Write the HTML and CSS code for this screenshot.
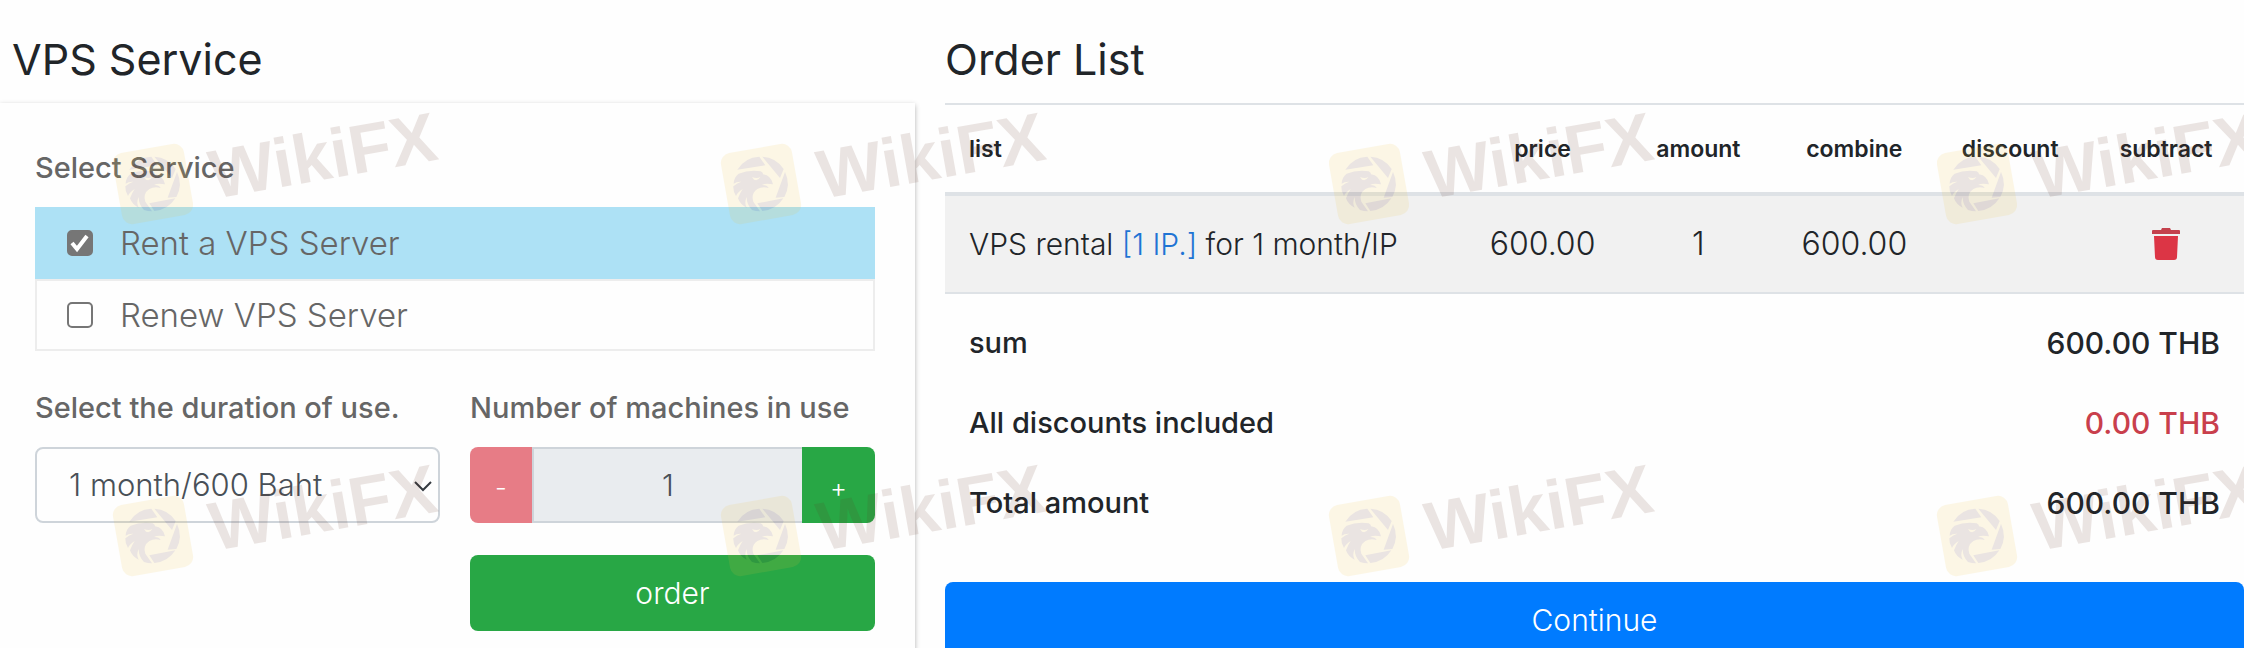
FILE: index.html
```
<!DOCTYPE html>
<html lang="en">
<head>
  <meta charset="UTF-8">
  <meta name="viewport" content="width=device-width, initial-scale=1.0">
  <title>VPS Service</title>
  <link rel="stylesheet" href="styles.css">
</head>
<body>
  <main class="page">
    <section class="service">
      <h1 class="page-title">VPS Service</h1>

      <form class="card">
        <fieldset class="options">
          <legend class="field-label">Select Service</legend>
          <label class="option active">
            <input type="checkbox" name="rent" checked>
            Rent a VPS Server
          </label>
          <label class="option">
            <input type="checkbox" name="renew">
            Renew VPS Server
          </label>
        </fieldset>

        <div class="fields">
          <div class="field">
            <label class="field-label" for="duration">Select the duration of use.</label>
            <div class="select-wrap">
              <select id="duration" class="control">
                <option>1 month/600 Baht</option>
              </select>
              <svg class="chevron" viewBox="0 0 18 12" aria-hidden="true">
                <path d="M1 2l8 8 8-8" fill="none" stroke="#343a40" stroke-width="2"/>
              </svg>
            </div>
          </div>

          <div class="field">
            <label class="field-label" for="machines">Number of machines in use</label>
            <div class="stepper">
              <button type="button" class="step minus" disabled>-</button>
              <input id="machines" class="control" type="text" value="1" readonly>
              <button type="button" class="step plus">+</button>
            </div>
            <button type="button" class="btn btn-success">order</button>
          </div>
        </div>
      </form>
    </section>

    <section class="orders">
      <h1 class="page-title">Order List</h1>

      <table class="order-table">
        <colgroup>
          <col class="col-list">
          <col span="5">
        </colgroup>
        <thead>
          <tr>
            <th>list</th>
            <th>price</th>
            <th>amount</th>
            <th>combine</th>
            <th>discount</th>
            <th>subtract</th>
          </tr>
        </thead>
        <tbody>
          <tr>
            <td>VPS rental <a href="#">[1 IP.]</a> for 1 month/IP</td>
            <td class="num">600.00</td>
            <td class="num">1</td>
            <td class="num">600.00</td>
            <td></td>
            <td>
              <button type="button" class="remove" aria-label="Remove">
                <svg viewBox="0 0 28 32" width="28" height="32" aria-hidden="true">
                  <path fill="#c4414d" d="M1 2h8l1-2h8l1 2h8a1 1 0 0 1 1 1v3H0V3a1 1 0 0 1 1-1z"/>
                  <path fill="#dc3545" d="M2 8h24l-1 21a3 3 0 0 1-3 3H6a3 3 0 0 1-3-3z"/>
                </svg>
              </button>
            </td>
          </tr>
        </tbody>
      </table>

      <table class="totals">
        <tr><th>sum</th><td>600.00 THB</td></tr>
        <tr><th>All discounts included</th><td class="danger">0.00 THB</td></tr>
        <tr><th>Total amount</th><td>600.00 THB</td></tr>
      </table>

      <button type="button" class="btn btn-primary">Continue</button>
    </section>
  </main>

  <svg class="defs" aria-hidden="true">
    <defs>
      <g id="eagle">
        <rect x="-36" y="-36" width="72" height="72" rx="10" transform="rotate(-10)" fill="#eec23a"/>
        <g transform="scale(.3333) translate(-901 -283)" fill="#612f1e">
          <path d="M830 240A82 82 0 0 1 896 201L914 227Z"/>
          <path d="M905 201A82 82 0 0 1 969 238L958 265Z"/>
          <path d="M973 247A82 82 0 0 1 971 322L945 324Z"/>
          <path d="M968 326A82 82 0 0 1 905 364L890 341Z"/>
          <path d="M834 252Q865 240 900 245Q908 249 907 254Q932 258 937 284Q915 279 904 286Q920 286 924 295Q905 290 890 298Q870 312 878 336L898 365A82 82 0 0 1 874 361Q858 345 858 322Q850 340 858 354Q838 344 832 326Q838 310 846 298Q830 308 826 319Q817 305 818 290Q830 280 842 276Q828 275 819 282Q820 262 834 252Z"/>
          <path d="M874 262Q888 268 899 262Q892 275 880 270Z" fill="#eec23a"/>
        </g>
      </g>
    </defs>
  </svg>

  <div class="watermarks" aria-hidden="true">
    <svg class="mark"><use href="#eagle" x="153" y="184"/><text transform="translate(214 199) rotate(-10)">WikiFX</text></svg>
    <svg class="mark"><use href="#eagle" x="153" y="184"/><text transform="translate(214 199) rotate(-10)">WikiFX</text></svg>
    <svg class="mark"><use href="#eagle" x="153" y="184"/><text transform="translate(214 199) rotate(-10)">WikiFX</text></svg>
    <svg class="mark"><use href="#eagle" x="153" y="184"/><text transform="translate(214 199) rotate(-10)">WikiFX</text></svg>
    <svg class="mark"><use href="#eagle" x="153" y="184"/><text transform="translate(214 199) rotate(-10)">WikiFX</text></svg>
    <svg class="mark"><use href="#eagle" x="153" y="184"/><text transform="translate(214 199) rotate(-10)">WikiFX</text></svg>
    <svg class="mark"><use href="#eagle" x="153" y="184"/><text transform="translate(214 199) rotate(-10)">WikiFX</text></svg>
    <svg class="mark"><use href="#eagle" x="153" y="184"/><text transform="translate(214 199) rotate(-10)">WikiFX</text></svg>
  </div>
</body>
</html>
```
FILE: styles.css
```
* {
  box-sizing: border-box;
}

body {
  margin: 0;
  min-height: 100vh;
  position: relative;
  overflow: hidden;
  font-family: Inter, sans-serif;
  font-size: 30px;
  font-weight: 350;
  line-height: 48px;
  color: #212529;
  background: #fefefe;
}

button,
input,
select {
  font: inherit;
  color: inherit;
}

.page {
  display: grid;
  grid-template-columns: 915fr 1299fr;
  gap: 30px;
}

.page-title {
  margin: 0;
  padding: 31px 0 16px;
  font-size: 43px;
  font-weight: 400;
  line-height: 56px;
}

/* left column */
.service {
  display: flex;
  flex-direction: column;
}

.service .page-title {
  padding-left: 12px;
}

.card {
  flex: 1;
  padding: 41px 40px 24px 35px;
  color: #666;
  box-shadow: 0 2px 5px rgba(0, 0, 0, 0.3);
  background: #fefefe;
}

.field-label {
  display: block;
  padding: 0;
  font-size: 29px;
  font-weight: 500;
}

.options {
  margin: 0;
  padding: 0;
  border: 0;
}

.options .field-label {
  margin-bottom: 15px;
}

.option {
  display: flex;
  align-items: center;
  gap: 27px;
  height: 72px;
  padding-left: 30px;
  font-size: 33px;
  border: 2px solid #ededed;
}

.option.active {
  background: #ade1f5;
  border-color: #ade1f5;
}

.option input {
  appearance: none;
  width: 26px;
  height: 26px;
  margin: 0;
  border: 2px solid #767676;
  border-radius: 5px;
  background: #fff;
}

.option input:checked {
  background: #767676 url("data:image/svg+xml,%3Csvg xmlns='http://www.w3.org/2000/svg' viewBox='0 0 22 22'%3E%3Cpath d='M3 11l5 6L18 4' fill='none' stroke='white' stroke-width='4'/%3E%3C/svg%3E") center / contain no-repeat;
}

.fields {
  display: grid;
  grid-template-columns: 1fr 1fr;
  gap: 30px;
  margin-top: 33px;
}

.field .field-label {
  margin-bottom: 15px;
}

.control {
  width: 100%;
  height: 76px;
  padding: 0 32px;
  color: #495057;
  border: 2px solid #ced4da;
  border-radius: 8px;
  background: transparent;
}

.select-wrap {
  position: relative;
}

.select-wrap .control {
  appearance: none;
  font-size: 31px;
}

.chevron {
  position: absolute;
  top: 33px;
  right: 8px;
  width: 18px;
  height: 12px;
}

.stepper {
  display: flex;
}

.stepper .control {
  flex: 1;
  min-width: 0;
  text-align: center;
  border-right: 0;
  border-radius: 0;
  background: #e9ecef;
}

.step {
  padding-top: 6px;
  border: 0;
  font-size: 26px;
  color: #fff;
}

.minus {
  width: 62px;
  border-radius: 8px 0 0 8px;
  background: #e77c86;
}

.plus {
  width: 73px;
  border-radius: 0 8px 8px 0;
  background: #28a745;
}

.btn {
  display: block;
  width: 100%;
  height: 76px;
  border: 0;
  border-radius: 8px;
  color: #fff;
}

.btn-success {
  margin-top: 32px;
  background: #28a745;
}

.btn-primary {
  margin-top: 39px;
  background: #007bff;
}

/* right column */
.order-table {
  width: 100%;
  table-layout: fixed;
  border-collapse: collapse;
}

.col-list {
  width: 40%;
}

.order-table th,
.order-table td {
  padding: 0;
  text-align: center;
}

.order-table th {
  height: 90px;
  font-size: 23px;
  font-weight: 600;
  border-top: 2px solid #dee2e6;
  border-bottom: 4px solid #dee2e6;
}

.order-table th:first-child,
.order-table td:first-child {
  padding-left: 24px;
  text-align: left;
}

.order-table td {
  height: 99px;
  background: #f1f1f1;
  border-bottom: 2px solid #dee2e6;
}

.order-table .num {
  font-size: 32px;
}

.order-table a {
  color: #1f74d4;
  text-decoration: none;
}

.remove {
  display: block;
  margin: 0 auto;
  padding: 0;
  border: 0;
  background: none;
}

.remove svg {
  display: block;
}

.totals {
  width: 100%;
  margin-top: 9px;
  border-collapse: collapse;
  font-size: 29px;
}

.totals th,
.totals td {
  height: 80px;
  padding: 0 24px;
  font-weight: 500;
  text-align: left;
}

.totals td {
  font-size: 30px;
  text-align: right;
}

.totals .danger {
  color: #c93f4c;
}

/* watermark layer */
.defs {
  position: absolute;
  width: 0;
  height: 0;
}

.watermarks {
  position: absolute;
  inset: 0;
  display: grid;
  grid-template-columns: repeat(4, 608px);
  grid-auto-rows: 352px;
  overflow: hidden;
  opacity: 0.12;
  pointer-events: none;
}

.mark {
  width: 100%;
  height: 100%;
  overflow: visible;
  font-family: "Liberation Sans", Arial, sans-serif;
  font-size: 69px;
  font-weight: 700;
  fill: #612f1e;
}
```
